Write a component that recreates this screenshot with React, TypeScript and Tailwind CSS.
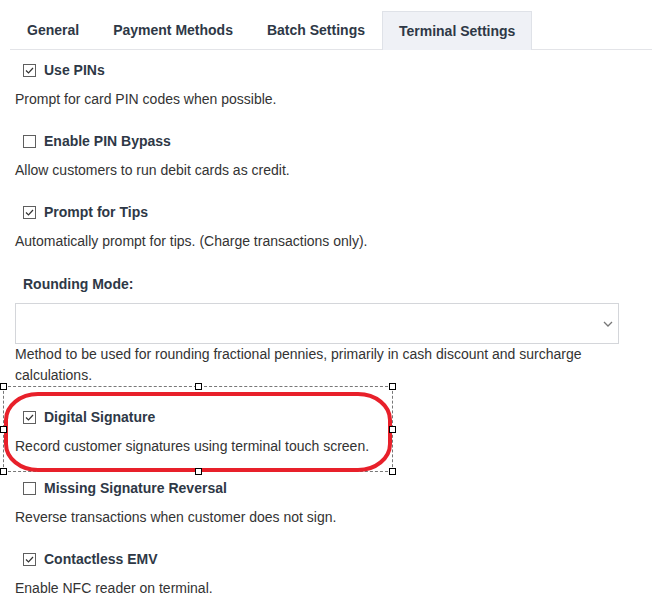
import React from "react";

const tabs = ["General", "Payment Methods", "Batch Settings", "Terminal Settings"];

const Checkbox = ({ checked }: { checked: boolean }) => (
  <span className="flex h-[13px] w-[13px] items-center justify-center border border-[#5f5f5f] bg-white">
    {checked && (
      <svg width="11" height="11" viewBox="0 0 11 11">
        <path d="M2 5.5 L4.5 8 L9 3" fill="none" stroke="#333" strokeWidth="1.2" />
      </svg>
    )}
  </span>
);

const Option = ({
  label,
  desc,
  checked,
  first,
}: {
  label: string;
  desc: string;
  checked: boolean;
  first?: boolean;
}) => (
  <div className={first ? "mt-[10px]" : "mt-[21px]"}>
    <div className="ml-[8px] flex h-[20px] items-center gap-[8px]">
      <Checkbox checked={checked} />
      <span className="text-[14px] font-bold text-[#2e3846]">{label}</span>
    </div>
    <p className="mt-[9px] text-[14px] leading-[21px] text-[#333]">{desc}</p>
  </div>
);

const Handle = () => <span className="h-[7px] w-[7px] border border-black bg-white" />;

const HandleRow = ({ middle = true }: { middle?: boolean }) => (
  <div className="-mx-[4px] flex items-center justify-between">
    <Handle />
    {middle ? <Handle /> : null}
    <Handle />
  </div>
);

export default function App() {
  return (
    <div className="relative h-[601px] w-[652px] overflow-hidden bg-white font-['Liberation_Sans',Arial,sans-serif]">
      <div className="ml-[10px] mt-[11px] flex border-b border-[#e3e4e8]">
        {tabs.map((t, i) => {
          const active = i === tabs.length - 1;
          return (
            <div
              key={t}
              className={`-mb-px flex h-[39px] items-center px-[16px] text-[14px] font-bold text-[#2e3846] ${
                active ? "border border-b-0 border-[#dfe2e8] bg-[#eff1f6]" : "border border-transparent"
              }`}
            >
              {t}
            </div>
          );
        })}
      </div>

      <div className="pl-[15px]">
        <Option first checked label="Use PINs" desc="Prompt for card PIN codes when possible." />
        <Option checked={false} label="Enable PIN Bypass" desc="Allow customers to run debit cards as credit." />
        <Option checked label="Prompt for Tips" desc="Automatically prompt for tips. (Charge transactions only)." />

        <div className="mt-[22px]">
          <div className="ml-[8px] flex h-[20px] items-center text-[14px] font-bold text-[#2e3846]">
            Rounding Mode:
          </div>
          <div className="mt-[9px] flex h-[41px] w-[604px] items-center justify-end border border-[#d4d6da] pr-[5px]">
            <svg width="10" height="6" viewBox="0 0 10 6">
              <path d="M1 1 L5 5 L9 1" fill="none" stroke="#777" strokeWidth="1.3" />
            </svg>
          </div>
          <p className="w-[600px] text-[14px] leading-[21px] text-[#333]">
            Method to be used for rounding fractional pennies, primarily in cash discount and surcharge calculations.
          </p>
        </div>

        <Option checked label="Digital Signature" desc="Record customer signatures using terminal touch screen." />
        <Option checked={false} label="Missing Signature Reversal" desc="Reverse transactions when customer does not sign." />
        <Option checked label="Contactless EMV" desc="Enable NFC reader on terminal." />
      </div>

      {/* annotation overlay: selection box with a red marker ring */}
      <div className="absolute left-[3px] top-[386px] flex h-[86px] w-[390px] flex-col justify-between border border-dashed border-[#777]">
        <svg className="absolute inset-0" width="390" height="86" viewBox="0 0 390 86">
          <rect x="2" y="7" width="384" height="76" rx="32" ry="26" fill="none" stroke="#e8202a" strokeWidth="4" />
        </svg>
        <div className="relative -mt-[4px]">
          <HandleRow />
        </div>
        <div className="relative">
          <HandleRow middle={false} />
        </div>
        <div className="relative -mb-[4px]">
          <HandleRow />
        </div>
      </div>
    </div>
  );
}
